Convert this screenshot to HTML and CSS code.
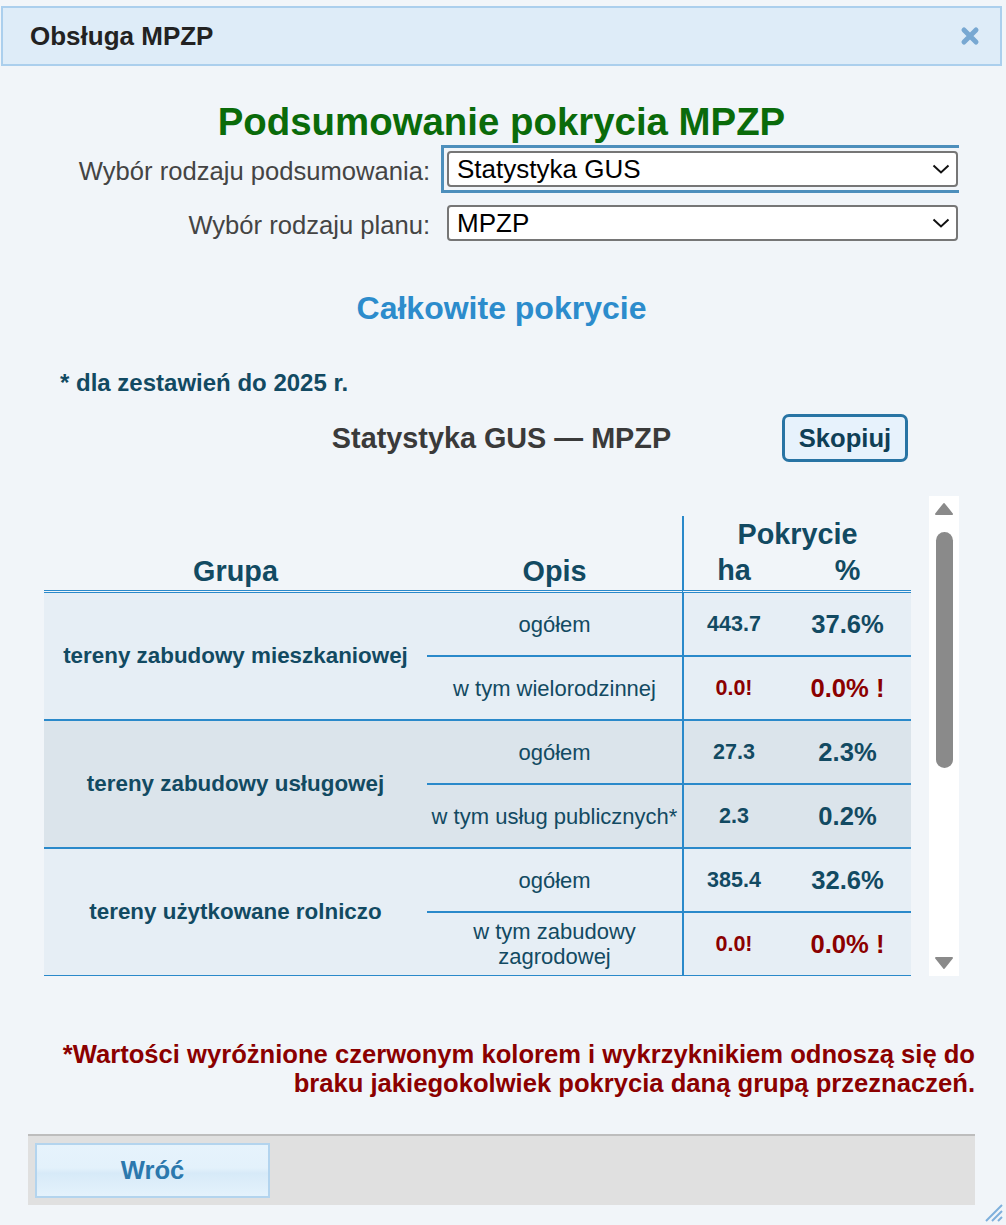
FILE: index.html
```html
<!DOCTYPE html>
<html lang="pl">
<head>
<meta charset="utf-8">
<title>Obsługa MPZP</title>
<link rel="stylesheet" href="styles.css">
</head>
<body>
<div class="dialog">
  <header class="titlebar">
    <span class="titlebar-text">Obsługa MPZP</span>
    <button class="close" aria-label="Zamknij">
      <svg width="20" height="20" viewBox="0 0 20 20"><path d="M4 4 L16 16 M16 4 L4 16" stroke="#78a8d2" stroke-width="5" stroke-linecap="round" fill="none"/></svg>
    </button>
  </header>
  <main class="content">
    <h1 class="title">Podsumowanie pokrycia MPZP</h1>
    <div class="form">
      <label class="form-label" for="s1">Wybór rodzaju podsumowania:</label>
      <div class="select-wrap focused">
        <select id="s1"><option>Statystyka GUS</option></select>
        <svg class="chevron" width="18" height="10" viewBox="0 0 18 10"><path d="M1.5 1.5 L9 8.5 L16.5 1.5" stroke="#111" stroke-width="2" fill="none"/></svg>
      </div>
      <label class="form-label" for="s2">Wybór rodzaju planu:</label>
      <div class="select-wrap">
        <select id="s2"><option>MPZP</option></select>
        <svg class="chevron" width="18" height="10" viewBox="0 0 18 10"><path d="M1.5 1.5 L9 8.5 L16.5 1.5" stroke="#111" stroke-width="2" fill="none"/></svg>
      </div>
    </div>
    <h2 class="subtitle">Całkowite pokrycie</h2>
    <p class="note">* dla zestawień do 2025 r.</p>
    <div class="table-head">
      <span></span>
      <h3 class="table-title">Statystyka GUS — MPZP</h3>
      <button class="copy">Skopiuj</button>
    </div>
    <div class="scroll-area">
      <div class="scroll-view">
        <table class="coverage">
          <colgroup><col class="c-group"><col class="c-desc"><col class="c-ha"><col class="c-pct"></colgroup>
          <thead>
            <tr><th rowspan="2" class="h-low">Grupa</th><th rowspan="2" class="h-low">Opis</th><th colspan="2" class="h-cov">Pokrycie</th></tr>
            <tr><th class="h-ha">ha</th><th class="h-pct">%</th></tr>
          </thead>
          <tbody class="g-light">
            <tr><td rowspan="2" class="grp">tereny zabudowy mieszkaniowej</td><td class="desc first">ogółem</td><td class="ha first">443.7</td><td class="pct first">37.6%</td></tr>
            <tr><td class="desc">w tym wielorodzinnej</td><td class="ha zero">0.0!</td><td class="pct zero">0.0% !</td></tr>
          </tbody>
          <tbody class="g-dark">
            <tr><td rowspan="2" class="grp">tereny zabudowy usługowej</td><td class="desc first">ogółem</td><td class="ha first">27.3</td><td class="pct first">2.3%</td></tr>
            <tr><td class="desc nowrap">w tym usług publicznych*</td><td class="ha">2.3</td><td class="pct">0.2%</td></tr>
          </tbody>
          <tbody class="g-light">
            <tr><td rowspan="2" class="grp">tereny użytkowane rolniczo</td><td class="desc first">ogółem</td><td class="ha first">385.4</td><td class="pct first">32.6%</td></tr>
            <tr><td class="desc">w tym zabudowy zagrodowej</td><td class="ha zero">0.0!</td><td class="pct zero">0.0% !</td></tr>
          </tbody>
        </table>
      </div>
      <div class="scrollbar" aria-hidden="true">
        <svg class="arrow" width="20" height="14" viewBox="0 0 20 14"><path d="M10 2 L18 12 L2 12 Z" fill="#8a8a8a" stroke="#8a8a8a" stroke-width="2" stroke-linejoin="round"/></svg>
        <div class="thumb"></div>
        <div class="track-rest"></div>
        <svg class="arrow" width="20" height="14" viewBox="0 0 20 14"><path d="M2 2 L18 2 L10 12 Z" fill="#8a8a8a" stroke="#8a8a8a" stroke-width="2" stroke-linejoin="round"/></svg>
      </div>
    </div>
    <p class="warning">*Wartości wyróżnione czerwonym kolorem i wykrzyknikiem odnoszą się do braku jakiegokolwiek pokrycia daną grupą przeznaczeń.</p>
    <div class="buttonbar">
      <button class="back">Wróć</button>
    </div>
  </main>
  <div class="grip" aria-hidden="true">
    <svg width="22" height="22" viewBox="0 0 22 22"><path d="M21 5 L5 21 M21 11 L11 21 M21 17 L17 21" stroke="#7fb0dc" stroke-width="2" fill="none"/></svg>
  </div>
</div>
</body>
</html>
```

FILE: styles.css
```css
html, body {
  margin: 0;
  padding: 0;
}

body {
  background: #f1f5f9;
  font-family: "Liberation Sans", Arial, sans-serif;
  color: #222;
}

.dialog {
  position: relative;
  height: 1225px;
  overflow: hidden;
  background: #f1f5f9;
}

/* Title bar */
.titlebar {
  box-sizing: border-box;
  height: 60px;
  margin: 6px 4px 0 1px;
  border: 2px solid #abcfed;
  background: #deecf8;
  display: flex;
  align-items: center;
  justify-content: space-between;
  padding: 0 20px 0 27px;
}

.titlebar-text {
  font-size: 26px;
  font-weight: bold;
  color: #222;
}

.close {
  border: 0;
  background: none;
  padding: 0;
  width: 20px;
  height: 20px;
  display: flex;
}

/* Content */
.content {
  padding: 0 31px 0 28px;
}

.title {
  margin: 34px 0 0;
  font-size: 38.4px;
  line-height: 44px;
  font-weight: bold;
  color: #0a6b0a;
  text-align: center;
}

.form {
  width: 931px;
  overflow: hidden;
  box-sizing: border-box;
  padding: 7px 1px 4px 0;
  display: grid;
  grid-template-columns: 402px 511px;
  column-gap: 17px;
  row-gap: 18px;
}

.form-label {
  align-self: center;
  text-align: right;
  font-size: 25.6px;
  line-height: 30px;
  color: #444;
  padding-top: 3px;
}

.select-wrap {
  position: relative;
  height: 36px;
}

.select-wrap.focused {
  outline: 3px solid #4d8fbc;
  outline-offset: 3px;
}

.select-wrap select {
  appearance: none;
  -webkit-appearance: none;
  box-sizing: border-box;
  width: 100%;
  height: 36px;
  border: 2px solid #767676;
  border-radius: 4px;
  background: #fff;
  color: #000;
  font-family: "Liberation Sans", Arial, sans-serif;
  font-size: 26px;
  padding: 0 40px 0 8px;
  margin: 0;
}

.chevron {
  position: absolute;
  right: 8px;
  top: 13px;
  pointer-events: none;
}

.subtitle {
  margin: 45px 0 0;
  font-size: 32px;
  line-height: 37px;
  font-weight: bold;
  color: #2c8ccc;
  text-align: center;
}

.note {
  margin: 42px 0 0 32px;
  font-size: 24px;
  line-height: 28px;
  font-weight: bold;
  color: #124a62;
}

.table-head {
  margin-top: 17px;
  height: 48px;
  display: grid;
  grid-template-columns: 1fr auto 1fr;
  align-items: center;
}

.table-title {
  margin: 0;
  font-size: 28.8px;
  line-height: 34px;
  font-weight: bold;
  color: #3a3a3a;
}

.copy {
  justify-self: end;
  margin-right: 67px;
  box-sizing: border-box;
  width: 126px;
  height: 48px;
  border: 3px solid #2874a4;
  border-radius: 7px;
  background: #e7f2fc;
  color: #0f3f56;
  font-family: "Liberation Sans", Arial, sans-serif;
  font-size: 25.6px;
  font-weight: bold;
  padding: 0;
}

/* Scroll area */
.scroll-area {
  margin-top: 34px;
  height: 480px;
  display: flex;
  gap: 18px;
  padding: 0 16px;
}

.scroll-view {
  flex: 1;
  overflow: hidden;
  padding-top: 20px;
}

.scrollbar {
  width: 30px;
  background: #fff;
  display: flex;
  flex-direction: column;
  align-items: center;
  padding: 6px 0 6px;
  box-sizing: border-box;
}

.arrow {
  display: block;
  flex: none;
}

.thumb {
  width: 17px;
  height: 236px;
  margin-top: 16px;
  background: #8a8a8a;
  border-radius: 9px;
  flex: none;
}

.track-rest {
  flex: 1;
}

/* Table */
.coverage {
  width: 867px;
  table-layout: fixed;
  border-collapse: separate;
  border-spacing: 0;
  color: #124a62;
}

.c-group { width: 383px; }
.c-desc { width: 255px; }
.c-ha { width: 102px; }
.c-pct { width: 127px; }

.coverage th {
  box-sizing: border-box;
  font-size: 28.8px;
  font-weight: bold;
  line-height: 34px;
  padding: 0;
  text-align: center;
}

.coverage th.h-low {
  vertical-align: bottom;
  border-bottom: 3px double #2a89ca;
  padding-bottom: 2px;
}

.coverage th.h-cov {
  height: 36px;
  border-left: 2px solid #2a89ca;
  vertical-align: middle;
}

.coverage th.h-ha,
.coverage th.h-pct {
  height: 41px;
  border-bottom: 3px double #2a89ca;
  padding-bottom: 2px;
}

.coverage th.h-ha {
  border-left: 2px solid #2a89ca;
}

.coverage td {
  box-sizing: border-box;
  height: 64px;
  padding: 0 2px;
  text-align: center;
  vertical-align: middle;
  border-bottom: 2px solid #2a89ca;
}

.g-light td { background: #e6eef5; }
.g-dark td { background: #dbe4eb; }

.coverage td.grp {
  height: auto;
  font-size: 22.4px;
  font-weight: bold;
  line-height: 26px;
  padding: 0 8px;
}

.coverage td.desc {
  font-size: 22px;
  line-height: 25px;
  padding: 0;
}

.coverage td.nowrap {
  white-space: nowrap;
}

.coverage td.ha {
  border-left: 2px solid #2a89ca;
  font-size: 21.5px;
  font-weight: bold;
}

.coverage td.pct {
  font-size: 25.6px;
  font-weight: bold;
}

.coverage td.zero {
  color: #8b0000;
}

/* Footer */
.warning {
  margin: 64px 0 0;
  font-size: 25.6px;
  line-height: 29px;
  font-weight: bold;
  color: #8b0000;
  text-align: right;
}

.buttonbar {
  margin-top: 36px;
  border-top: 2px solid #bdbdbd;
  background: #e0e0e0;
  padding: 7px;
}

.back {
  display: block;
  box-sizing: border-box;
  width: 235px;
  height: 55px;
  border: 2px solid #b3d4ee;
  background: linear-gradient(#e6f3fc 0%, #e3f1fb 45%, #d7eaf8 55%, #e4f2fc 100%);
  color: #2b78ad;
  font-family: "Liberation Sans", Arial, sans-serif;
  font-size: 25.6px;
  font-weight: bold;
  padding: 0;
}

.grip {
  position: absolute;
  right: 3px;
  bottom: 3px;
  width: 22px;
  height: 22px;
}
```
